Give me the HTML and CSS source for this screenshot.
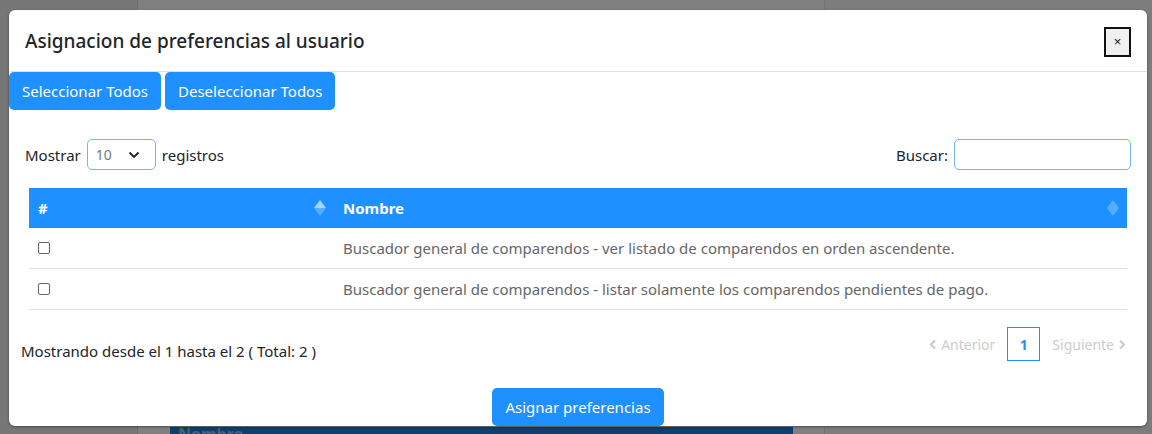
FILE: index.html
```html
<!DOCTYPE html>
<html lang="es">
<head>
    <meta charset="UTF-8">
    <meta name="viewport" content="width=device-width, initial-scale=1.0">
    <title>Asignacion de preferencias</title>
    <link rel="stylesheet" href="styles.css">
</head>
<body>
    <div class="fondo">
        <div class="fondo-lateral"></div>
        <div class="fondo-panel">
            <div class="fondo-tabla">Nombre</div>
        </div>
    </div>

    <div class="modal">
        <div class="modal-header">
            <h4>Asignacion de preferencias al usuario</h4>
            <button class="btn-cerrar">&times;</button>
        </div>
        <div class="acciones">
            <button class="btn">Seleccionar Todos</button>
            <button class="btn">Deseleccionar Todos</button>
        </div>

        <div class="controles">
            <label>Mostrar
                <span class="selector">10
                    <svg width="12" height="8" viewBox="0 0 12 8"><path d="M1.5 1.5 L6 6 L10.5 1.5" fill="none" stroke="#222" stroke-width="1.8"/></svg>
                </span>
                registros</label>
            <label>Buscar: <span class="buscar"></span></label>
        </div>

        <table>
            <thead>
                <tr>
                    <th class="col-check"># <span class="orden activo"><i class="arriba"></i><i class="abajo"></i></span></th>
                    <th>Nombre <span class="orden"><i class="arriba"></i><i class="abajo"></i></span></th>
                </tr>
            </thead>
            <tbody>
                <tr>
                    <td><span class="check"></span></td>
                    <td>Buscador general de comparendos - ver listado de comparendos en orden ascendente.</td>
                </tr>
                <tr>
                    <td><span class="check"></span></td>
                    <td>Buscador general de comparendos - listar solamente los comparendos pendientes de pago.</td>
                </tr>
            </tbody>
        </table>

        <div class="pie">
            <span class="info">Mostrando desde el 1 hasta el 2 ( Total: 2 )</span>
            <div class="paginas">
                <span class="pag-off">
                    <svg width="8" height="11" viewBox="0 0 8 11"><path d="M6 1.5 L2 5.5 L6 9.5" fill="none" stroke="#ccc" stroke-width="2.2"/></svg>
                    Anterior</span>
                <span class="pag-actual">1</span>
                <span class="pag-off">Siguiente
                    <svg width="8" height="11" viewBox="0 0 8 11"><path d="M2 1.5 L6 5.5 L2 9.5" fill="none" stroke="#ccc" stroke-width="2.2"/></svg>
                </span>
            </div>
        </div>

        <div class="final">
            <button class="btn">Asignar preferencias</button>
        </div>
    </div>
</body>
</html>
```

FILE: styles.css
```css
html, body {
    overflow: hidden;
}

body {
    margin: 0;
    background-color: #7d7d7d;
    font-family: "Noto Sans", "Open Sans", sans-serif;
    color: #212529;
    height: 434px;
}

.fondo {
    display: flex;
    height: 434px;
}

.fondo-lateral {
    width: 137px;
    background-color: #777;
    border-right: 1px solid #6e6e6e;
}

.fondo-panel {
    width: 687px;
    box-sizing: border-box;
    background-color: #808080;
    border-right: 1px solid #737373;
    display: flex;
    flex-direction: column;
    justify-content: flex-end;
    padding-left: 32px;
}

.fondo-tabla {
    width: 623px;
    height: 7px;
    overflow: hidden;
    background-color: #0e3f6f;
    color: #4a5f78;
    font-weight: bold;
    font-size: 16px;
    padding: 0 8px;
    line-height: 14px;
    box-sizing: border-box;
}

.modal {
    position: absolute;
    top: 10px;
    left: 9px;
    width: 1138px;
    height: 416px;
    background-color: white;
    border-radius: 6px;
    box-shadow: 0 1px 3px rgba(0, 0, 0, 0.4);
}

.modal-header {
    height: 62px;
    border-bottom: 1px solid #dee2e6;
    display: flex;
    align-items: center;
    justify-content: space-between;
    padding: 0 16px;
    box-sizing: border-box;
}

.modal-header h4 {
    margin: 0;
    font-size: 19px;
    font-weight: 500;
    color: #212529;
}

.btn-cerrar {
    width: 27px;
    height: 30px;
    margin-top: 2px;
    background-color: #f0f0f0;
    border: 2px solid #111;
    font-size: 13px;
    padding: 0;
    line-height: 1;
    color: #111;
}

.acciones {
    display: flex;
    gap: 4px;
}

.btn {
    background-color: #1e90ff;
    color: white;
    border: none;
    border-radius: 5px;
    font-family: inherit;
    font-size: 15px;
    padding: 0 13px;
    height: 38px;
}

.controles {
    display: flex;
    justify-content: space-between;
    align-items: center;
    padding: 29px 16px 0 16px;
    font-size: 15px;
}

.controles label {
    display: flex;
    align-items: center;
    gap: 6px;
}

.selector {
    width: 69px;
    height: 31px;
    box-sizing: border-box;
    border: 1px solid #76b3f5;
    border-radius: 5px;
    display: inline-flex;
    align-items: center;
    justify-content: space-between;
    padding: 0 15px 0 8px;
    color: #777;
    font-size: 14px;
}

.buscar {
    display: inline-block;
    width: 177px;
    height: 31px;
    box-sizing: border-box;
    border: 1px solid #76b3f5;
    border-radius: 5px;
}

table {
    width: 1098px;
    margin: 18px 0 0 20px;
    border-collapse: collapse;
    font-size: 15px;
}

th {
    background-color: #1e90ff;
    color: white;
    text-align: left;
    height: 40px;
    padding: 0 9px;
    font-size: 15px;
    position: relative;
}

.col-check {
    width: 287px;
}

td {
    height: 40px;
    border-bottom: 1px solid #dee2e6;
    padding: 0 9px;
    color: #666;
}

.check {
    display: inline-block;
    width: 10px;
    height: 10px;
    border: 1px solid #666;
    border-radius: 2px;
    vertical-align: middle;
    margin-top: -4px;
}

.orden {
    position: absolute;
    right: 8px;
    top: 12px;
    display: flex;
    flex-direction: column;
}

.orden i {
    width: 0;
    height: 0;
    border-left: 6px solid transparent;
    border-right: 6px solid transparent;
}

.orden .arriba {
    border-bottom: 8px solid rgba(255, 255, 255, 0.25);
}

.orden .abajo {
    border-top: 8px solid rgba(255, 255, 255, 0.25);
}

.orden.activo .arriba {
    border-bottom-color: rgba(255, 255, 255, 0.6);
}

.pie {
    display: flex;
    justify-content: space-between;
    align-items: flex-start;
    padding: 17px 20px 0 12px;
    font-size: 15px;
}

.info {
    margin-top: 14px;
}

.paginas {
    display: flex;
    align-items: center;
    gap: 11px;
}

.pag-off {
    color: #ccc;
    font-size: 14px;
    padding: 0 1px;
    display: flex;
    align-items: center;
    gap: 4px;
}

.pag-actual {
    width: 33px;
    height: 34px;
    box-sizing: border-box;
    border: 1px solid #1e90ff;
    color: #1e90ff;
    font-weight: bold;
    font-size: 14px;
    display: flex;
    align-items: center;
    justify-content: center;
}

.final {
    display: flex;
    justify-content: center;
    margin-top: 27px;
}
```
